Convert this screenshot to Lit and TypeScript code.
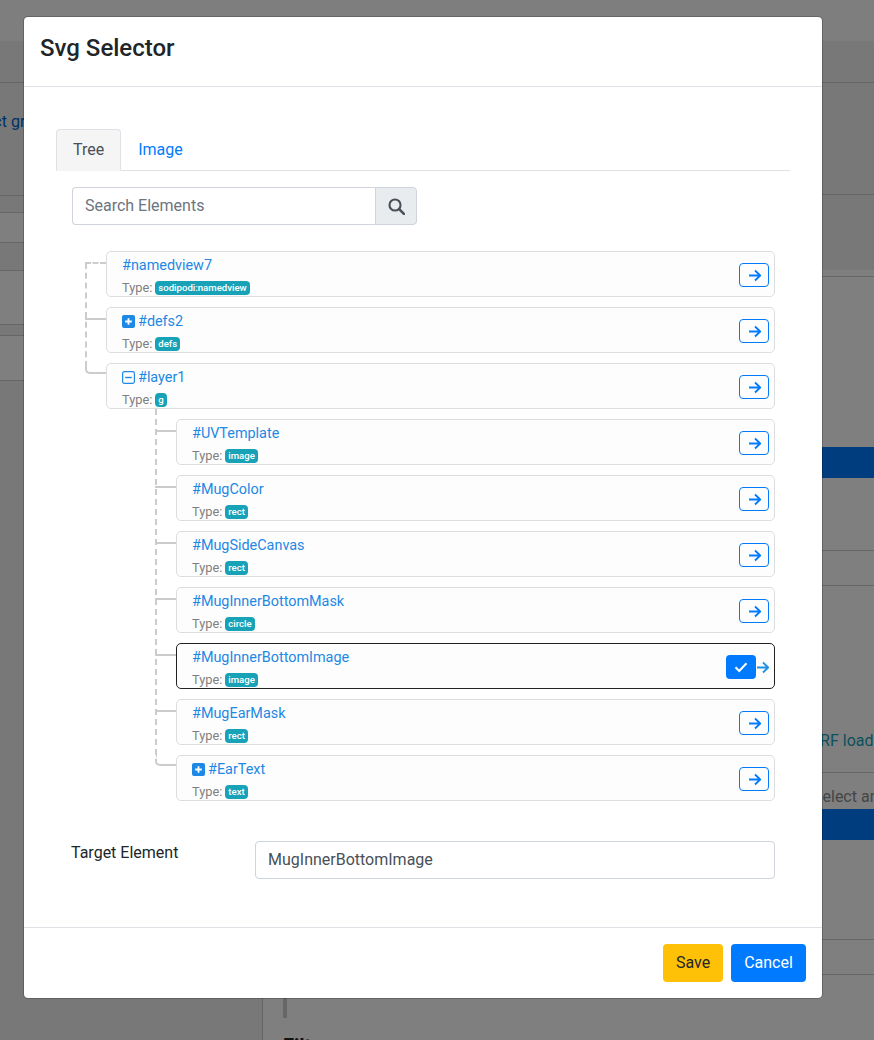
import { LitElement, html, css, svg } from "lit";
import { customElement } from "lit/decorators.js";

type Node = { id: string; type: string; icon?: "plus" | "minus"; selected?: boolean; children?: Node[]; first?: boolean };

const tree: Node[] = [
  { id: "namedview7", type: "sodipodi:namedview", first: true },
  { id: "defs2", type: "defs", icon: "plus" },
  {
    id: "layer1",
    type: "g",
    icon: "minus",
    children: [
      { id: "UVTemplate", type: "image" },
      { id: "MugColor", type: "rect" },
      { id: "MugSideCanvas", type: "rect" },
      { id: "MugInnerBottomMask", type: "circle" },
      { id: "MugInnerBottomImage", type: "image", selected: true },
      { id: "MugEarMask", type: "rect" },
      { id: "EarText", type: "text", icon: "plus" },
    ],
  },
];

const arrow = svg`<path d="M1 6.5H12M7 1.5L12.2 6.5L7 11.5" fill="none" stroke="currentColor" stroke-width="1.8" stroke-linejoin="round"/>`;

@customElement("app-root")
export class AppRoot extends LitElement {
  static styles = css`
    :host {
      display: block;
      width: 874px;
      height: 1040px;
      position: relative;
      overflow: hidden;
      font-family: Roboto, "Liberation Sans", sans-serif;
      font-size: 16px;
      color: #212529;
      background: #fff;
    }
    * { box-sizing: border-box; }

    /* page behind the dialog */
    .page { height: 1040px; display: flex; flex-direction: column; }
    .topbar { height: 41px; flex: none; background: #fcfcfc; }
    .cols { flex: 1; display: flex; min-height: 0; }
    .left { width: 263px; flex: none; border-right: 1px solid #ccc; background: #f0f0f0; display: flex; flex-direction: column; }
    .right { flex: 1; min-width: 0; display: flex; flex-direction: column; }
    .r { flex: none; border-bottom: 1px solid #ccc; overflow: hidden; white-space: nowrap; }
    .plain { border: 0; }
    .shade { background: #f0f0f0; }
    .clean { background: #fff; }
    .link { color: #0062cc; line-height: 24px; padding-top: 27px; text-indent: -37px; }
    .blue { background: #007bff; border: 0; }
    .teal { color: #17a2b8; padding: 143px 0 0 548px; line-height: 24px; }
    .muted { color: #8a8a8a; padding: 12px 0 0 550px; line-height: 24px; border: 0; }
    .marker { width: 4px; height: 20px; background: #ccc; margin: 23px 0 0 20px; flex: none; }
    .filt { margin: 16px 0 0 20px; font-weight: 700; font-size: 20px; color: #212529; }

    /* dialog */
    .backdrop {
      position: absolute;
      inset: 0;
      background: rgba(0, 0, 0, 0.5);
      padding: 16px 0 0 23px;
    }
    .modal {
      width: 800px;
      height: 983px;
      background: #fff;
      background-clip: padding-box;
      border: 1px solid rgba(0, 0, 0, 0.2);
      border-radius: 5px;
      display: flex;
      flex-direction: column;
    }
    .head { height: 70px; flex: none; padding: 13px 16px; border-bottom: 1px solid #dee2e6; }
    .head h5 { margin: 0; font-size: 24px; font-weight: 500; line-height: 36px; }
    .body { flex: 1; padding: 42px 32px 0; min-height: 0; }
    .tabs { display: flex; border-bottom: 1px solid #dee2e6; height: 42px; }
    .tab { padding: 8px 16px; line-height: 24px; height: 42px; border: 1px solid transparent; border-radius: 4px 4px 0 0; color: #007bff; margin-right: 0; }
    .tab.on { color: #495057; background: #f5f5f6; border-color: #dee2e6 #dee2e6 #f5f5f6; }
    .pane { padding: 16px 15px 0 16px; }
    .search { display: flex; width: 345px; height: 38px; }
    .search .field {
      flex: 1;
      border: 1px solid #ced4da;
      border-right: 0;
      border-radius: 4px 0 0 4px;
      padding: 6px 12px;
      line-height: 24px;
      color: #6c757d;
    }
    .search .btn {
      width: 42px;
      background: #e9ecef;
      border: 1px solid #ced4da;
      border-radius: 0 4px 4px 0;
      display: flex;
      align-items: center;
      justify-content: center;
      color: #495057;
    }
    .tree { margin: 26px 0 0 34px; position: relative; }
    .item { position: relative; margin-bottom: 10px; }
    .group { position: relative; margin: 10px 0 0 70px; }
    .group .item:last-child { margin-bottom: 0; }
    .row {
      height: 46px;
      border: 1px solid #ddd;
      border-radius: 5px;
      background: #fdfdfd;
      padding: 3px 5px 0 15px;
      display: flex;
      align-items: flex-start;
      justify-content: space-between;
    }
    .row.sel { border-color: #222; }
    .info { display: flex; flex-direction: column; }
    .title { display: flex; align-items: center; gap: 3px; height: 21px; font-size: 14.4px; color: #1e88e5; }
    .title svg { flex: none; }
    .type { display: flex; align-items: center; gap: 3px; height: 21px; margin-top: 1px; font-size: 12.8px; color: #808080; }
    .badge {
      background: #17a2b8;
      color: #fff;
      font-size: 9.6px;
      font-weight: 500;
      line-height: 14px;
      height: 14px;
      padding: 0 3px;
      border-radius: 4px;
    }
    .actions { display: flex; align-items: center; margin-top: 8px; }
    .go {
      width: 30px;
      height: 24px;
      border: 1px solid #007bff;
      border-radius: 4px;
      color: #007bff;
      display: flex;
      align-items: center;
      justify-content: center;
    }
    .check {
      width: 30px;
      height: 24px;
      background: #007bff;
      border-radius: 4px;
      display: flex;
      align-items: center;
      justify-content: center;
    }
    .bare { color: #1e90e5; width: 13px; margin-right: 0; display: flex; }
    .tick { position: absolute; left: -21px; top: 11px; width: 21px; border-top: 2px solid #ccc; }
    .tick.dash { border-top-style: dashed; }
    .tick.end {
      top: 0;
      height: 11px;
      border: 0;
      border-left: 2px dashed #ccc;
      border-bottom: 2px solid #ccc;
      border-bottom-left-radius: 5px;
    }
    .vert { position: absolute; left: -21px; border-left: 2px dashed #ccc; }
    .vert.root { top: 12px; height: 104px; }
    .vert.sub { top: -10px; height: 346px; }

    .target { display: flex; margin-top: 40px; margin-left: -1px; }
    .target label { width: 184px; flex: none; line-height: 24px; }
    .target .value {
      flex: 1;
      height: 38px;
      border: 1px solid #ced4da;
      border-radius: 4px;
      padding: 6px 12px;
      line-height: 24px;
      color: #495057;
    }
    .foot { height: 71px; flex: none; border-top: 1px solid #dee2e6; padding: 16px; display: flex; justify-content: flex-end; gap: 8px; }
    .b { height: 38px; line-height: 38px; border-radius: 4px; text-align: center; }
    .save { width: 60px; background: #ffc107; color: #212529; }
    .cancel { width: 75px; background: #007bff; color: #fff; }
  `;

  private expander(kind?: "plus" | "minus") {
    if (kind === "plus") {
      return html`<svg width="13" height="13" viewBox="0 0 13 13"><rect width="13" height="13" rx="2" fill="#1e88e5"/><path d="M6.5 3.2V9.8M3.2 6.5H9.8" stroke="#fff" stroke-width="1.8"/></svg>`;
    }
    if (kind === "minus") {
      return html`<svg width="13" height="13" viewBox="0 0 13 13"><rect x=".6" y=".6" width="11.8" height="11.8" rx="1.8" fill="none" stroke="#1e88e5" stroke-width="1.2"/><path d="M3.2 6.5H9.8" stroke="#1e88e5" stroke-width="1.4"/></svg>`;
    }
    return null;
  }

  private renderNode(n: Node, last: boolean) {
    return html`<div class="item">
      <span class="tick ${n.first ? "dash" : ""} ${last ? "end" : ""}"></span>
      <div class="row ${n.selected ? "sel" : ""}">
        <div class="info">
          <div class="title">${this.expander(n.icon)}<span>#${n.id}</span></div>
          <div class="type"><span>Type:</span><span class="badge">${n.type}</span></div>
        </div>
        <div class="actions">
          ${n.selected
            ? html`<span class="check"><svg width="14" height="12" viewBox="0 0 14 12"><path d="M1.5 6.3L5.2 10L12.5 2.2" fill="none" stroke="#fff" stroke-width="2"/></svg></span>
                <span class="bare"><svg width="13" height="13" viewBox="0 0 13 13">${arrow}</svg></span>`
            : html`<span class="go"><svg width="13" height="13" viewBox="0 0 13 13">${arrow}</svg></span>`}
        </div>
      </div>
      ${n.children
        ? html`<div class="group">
            <span class="vert sub"></span>
            ${n.children.map((c, i) => this.renderNode(c, i === n.children!.length - 1))}
          </div>`
        : null}
    </div>`;
  }

  render() {
    return html`
      <div class="page">
        <div class="topbar"></div>
        <div class="cols">
          <div class="left">
            <div class="r shade" style="height:42px"></div>
            <div class="r shade link" style="height:113px">Select group</div>
            <div class="r shade" style="height:17px"></div>
            <div class="r clean" style="height:30px"></div>
            <div class="r shade" style="height:28px"></div>
            <div class="r clean" style="height:54px"></div>
            <div class="r shade" style="height:11px"></div>
            <div class="r clean" style="height:45px"></div>
          </div>
          <div class="right">
            <div class="r shade" style="height:42px"></div>
            <div class="r shade" style="height:112px"></div>
            <div class="r shade plain" style="height:75px"></div>
            <div class="r clean" style="height:7px"></div>
            <div class="r clean plain" style="height:170px"></div>
            <div class="r blue" style="height:31px"></div>
            <div class="r clean" style="height:73px"></div>
            <div class="r clean" style="height:35px"></div>
            <div class="r clean teal" style="height:187px">ERF load</div>
            <div class="r clean muted" style="height:36px">Select an</div>
            <div class="r blue" style="height:31px"></div>
            <div class="r clean" style="height:100px"></div>
            <div class="r clean" style="height:35px"></div>
            <div class="marker"></div>
            <div class="filt">Filters</div>
          </div>
        </div>
      </div>

      <div class="backdrop">
        <div class="modal">
          <div class="head"><h5>Svg Selector</h5></div>
          <div class="body">
            <div class="tabs">
              <div class="tab on">Tree</div>
              <div class="tab">Image</div>
            </div>
            <div class="pane">
              <div class="search">
                <div class="field">Search Elements</div>
                <div class="btn">
                  <svg width="17" height="17" viewBox="0 0 16 16"><circle cx="6.6" cy="6.6" r="5.2" fill="none" stroke="currentColor" stroke-width="2"/><path d="M10.5 10.5L15 15" stroke="currentColor" stroke-width="2.4" stroke-linecap="round"/></svg>
                </div>
              </div>
              <div class="tree">
                <span class="vert root"></span>
                ${tree.map((n, i) => this.renderNode(n, i === tree.length - 1))}
              </div>
              <div class="target">
                <label>Target Element</label>
                <div class="value">MugInnerBottomImage</div>
              </div>
            </div>
          </div>
          <div class="foot">
            <div class="b save">Save</div>
            <div class="b cancel">Cancel</div>
          </div>
        </div>
      </div>
    `;
  }
}
